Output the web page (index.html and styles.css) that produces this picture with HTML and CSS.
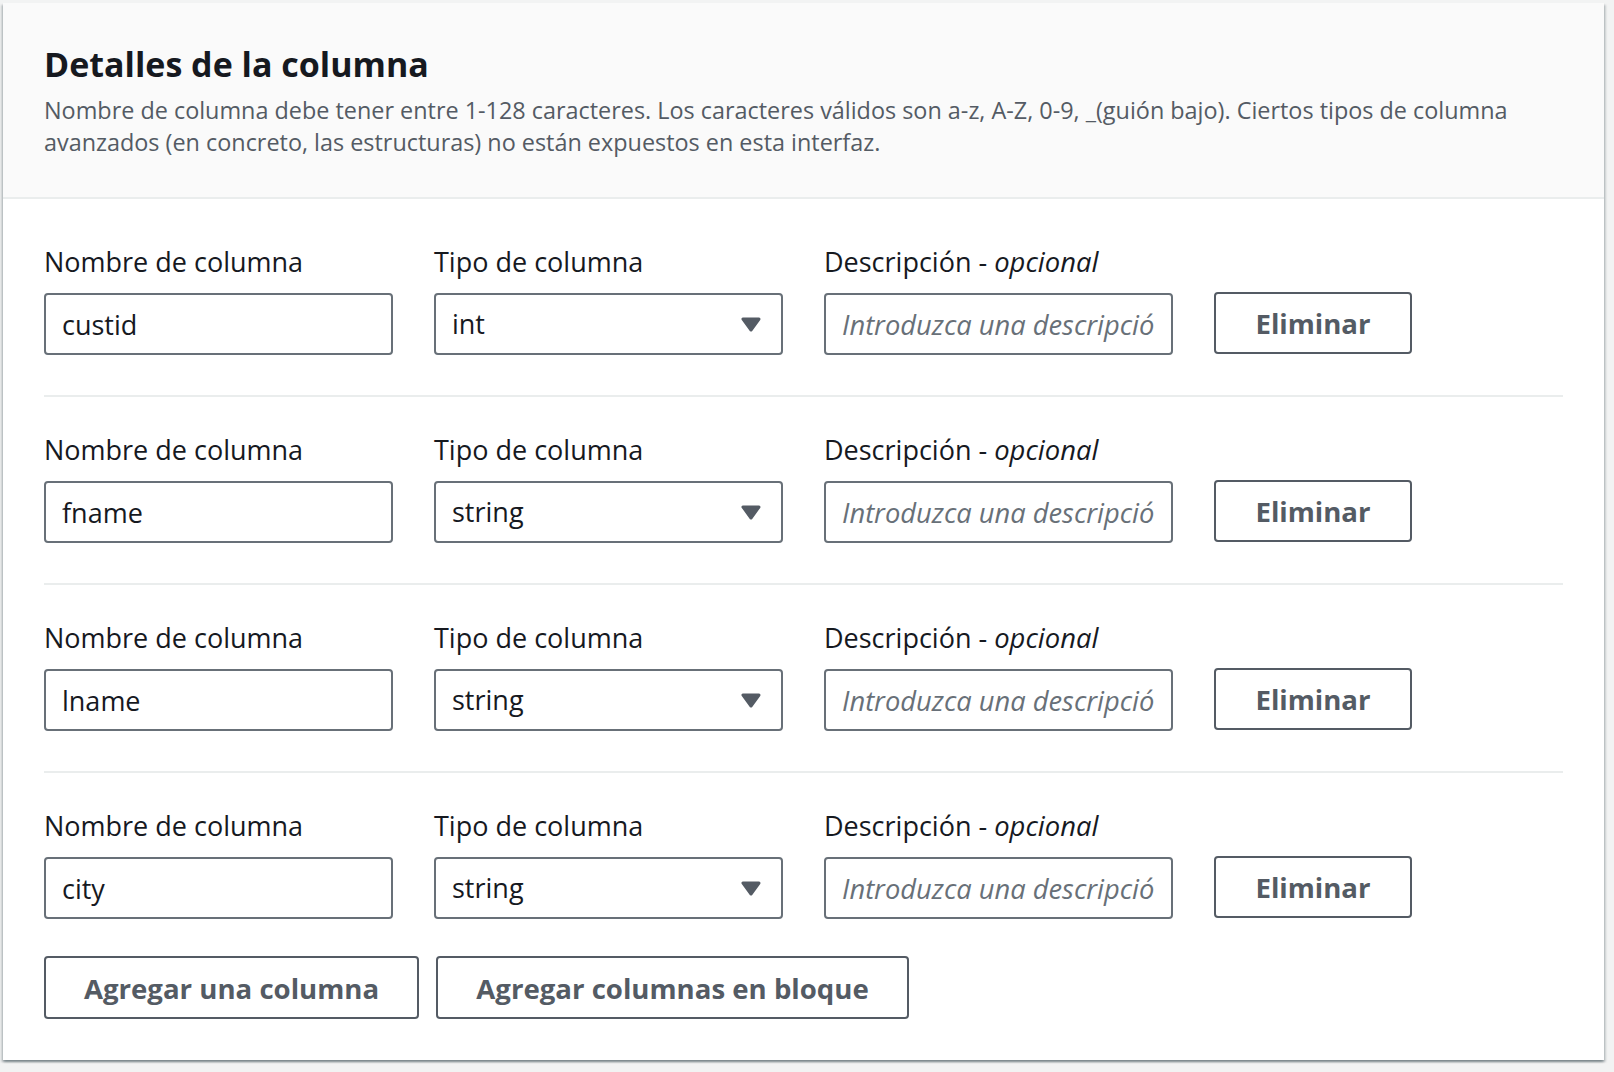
FILE: index.html
```html
<!DOCTYPE html>
<html lang="es">
<head>
<meta charset="utf-8">
<title>Detalles de la columna</title>
<link rel="stylesheet" href="styles.css">
</head>
<body>
<section class="panel">
  <header class="panel-header">
    <h2 class="panel-title">Detalles de la columna</h2>
    <p class="panel-desc">Nombre de columna debe tener entre 1-128 caracteres. Los caracteres válidos son a-z, A-Z, 0-9, _(guión bajo). Ciertos tipos de columna avanzados (en concreto, las estructuras) no están expuestos en esta interfaz.</p>
  </header>
  <div class="panel-body">
    <div class="rows">
      <div class="col-row">
        <div class="field"><label class="field-label">Nombre de columna</label><input class="control" type="text" value="custid"></div>
        <div class="field"><label class="field-label">Tipo de columna</label><div class="select-wrap"><select class="control select"><option>int</option></select><svg class="caret" viewBox="0 0 20 15" width="20" height="15"><path d="M2 2 L18 2 L10 13 Z"/></svg></div></div>
        <div class="field"><label class="field-label">Descripción - <i>opcional</i></label><input class="control desc" type="text" placeholder="Introduzca una descripción"></div>
        <button class="btn btn-remove" type="button">Eliminar</button>
      </div>
      <div class="col-row">
        <div class="field"><label class="field-label">Nombre de columna</label><input class="control" type="text" value="fname"></div>
        <div class="field"><label class="field-label">Tipo de columna</label><div class="select-wrap"><select class="control select"><option>string</option></select><svg class="caret" viewBox="0 0 20 15" width="20" height="15"><path d="M2 2 L18 2 L10 13 Z"/></svg></div></div>
        <div class="field"><label class="field-label">Descripción - <i>opcional</i></label><input class="control desc" type="text" placeholder="Introduzca una descripción"></div>
        <button class="btn btn-remove" type="button">Eliminar</button>
      </div>
      <div class="col-row">
        <div class="field"><label class="field-label">Nombre de columna</label><input class="control" type="text" value="lname"></div>
        <div class="field"><label class="field-label">Tipo de columna</label><div class="select-wrap"><select class="control select"><option>string</option></select><svg class="caret" viewBox="0 0 20 15" width="20" height="15"><path d="M2 2 L18 2 L10 13 Z"/></svg></div></div>
        <div class="field"><label class="field-label">Descripción - <i>opcional</i></label><input class="control desc" type="text" placeholder="Introduzca una descripción"></div>
        <button class="btn btn-remove" type="button">Eliminar</button>
      </div>
      <div class="col-row">
        <div class="field"><label class="field-label">Nombre de columna</label><input class="control" type="text" value="city"></div>
        <div class="field"><label class="field-label">Tipo de columna</label><div class="select-wrap"><select class="control select"><option>string</option></select><svg class="caret" viewBox="0 0 20 15" width="20" height="15"><path d="M2 2 L18 2 L10 13 Z"/></svg></div></div>
        <div class="field"><label class="field-label">Descripción - <i>opcional</i></label><input class="control desc" type="text" placeholder="Introduzca una descripción"></div>
        <button class="btn btn-remove" type="button">Eliminar</button>
      </div>
    </div>
    <div class="actions">
      <button class="btn btn-add" type="button">Agregar una columna</button>
      <button class="btn btn-bulk" type="button">Agregar columnas en bloque</button>
    </div>
  </div>
</section>
</body>
</html>
```
FILE: styles.css
```css
html, body {
  margin: 0;
  background: #f2f3f3;
}
body {
  padding: 3px 10px 12px 3px;
  font-family: "Open Sans", "Noto Sans", sans-serif;
  color: #16191f;
}
.panel {
  width: 1601px;
  background: #ffffff;
  box-shadow: 0 2px 2px rgba(0, 28, 36, 0.3), 2px 2px 2px rgba(0, 28, 36, 0.15), -2px 2px 2px rgba(0, 28, 36, 0.15);
}
.panel-header {
  background: #fafafa;
  border-bottom: 2px solid #eaeded;
  padding: 39px 41px 39px 41px;
}
.panel-title {
  margin: 0;
  font-size: 34px;
  line-height: 44px;
  font-weight: 700;
  color: #16191f;
}
.panel-desc {
  margin: 8px 0 0 0;
  font-size: 23.4px;
  line-height: 32px;
  color: #545b64;
}
.panel-body {
  padding: 10px 41px 41px 41px;
}
.col-row {
  display: flex;
  align-items: flex-end;
  column-gap: 41px;
  padding: 35px 0 40px 0;
  border-bottom: 2px solid #eaeded;
}
.col-row:last-child {
  border-bottom: none;
  padding-bottom: 37px;
}
.field {
  display: flex;
  flex-direction: column;
  row-gap: 13px;
  width: 349px;
}
.field-label {
  font-size: 27px;
  line-height: 36px;
  color: #16191f;
  white-space: nowrap;
}
.field-label i {
  font-style: italic;
  font-size: 27.4px;
}
.control {
  box-sizing: border-box;
  width: 349px;
  height: 62px;
  margin: 0;
  padding: 0 14px 0 16px;
  border: 2px solid #687078;
  border-radius: 4px;
  background: #ffffff;
  font-family: "Open Sans", "Noto Sans", sans-serif;
  font-size: 27px;
  line-height: 36px;
  color: #16191f;
  outline: none;
}
.desc {
  padding-right: 17px;
  font-size: 27.3px;
}
.desc::placeholder {
  color: #687078;
  font-style: italic;
  opacity: 1;
}
.select-wrap {
  position: relative;
  width: 349px;
  height: 62px;
}
.select {
  appearance: none;
  -webkit-appearance: none;
  display: block;
  padding-right: 50px;
}
.caret {
  position: absolute;
  right: 22px;
  top: 24px;
  pointer-events: none;
}
.caret path {
  fill: #545b64;
  stroke: #545b64;
  stroke-width: 3;
  stroke-linejoin: round;
}
.btn {
  box-sizing: border-box;
  height: 62px;
  margin: 0;
  padding: 0;
  border: 2px solid #545b64;
  border-radius: 4px;
  background: #ffffff;
  font-family: "Open Sans", "Noto Sans", sans-serif;
  font-size: 27.6px;
  font-weight: 700;
  line-height: 36px;
  color: #545b64;
  white-space: nowrap;
}
.btn-remove {
  width: 198px;
  margin-bottom: 1px;
}
.actions {
  display: flex;
  column-gap: 17px;
}
.btn-add {
  width: 375px;
  height: 63px;
}
.btn-bulk {
  width: 473px;
  height: 63px;
}
```
